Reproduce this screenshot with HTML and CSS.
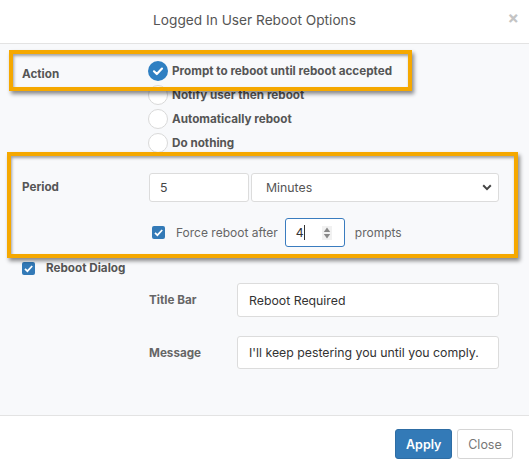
FILE: index.html
```html
<!DOCTYPE html>
<html>
<head>
<meta charset="utf-8">
<link rel="stylesheet" href="styles.css">
</head>
<body>
<div class="modal">
  <div class="modal-header">
    <span></span>
    <h1 class="modal-title">Logged In User Reboot Options</h1>
    <span class="close">&times;</span>
  </div>
  <div class="modal-body">
    <div class="row row-action">
      <div class="label label-action">Action</div>
      <div class="radios">
        <div class="radio"><span class="radio-dot checked"><svg viewBox="0 0 20 20" width="20" height="20"><path d="M6 10.3 L8.8 13 L14 7.6" fill="none" stroke="#fff" stroke-width="2.2" stroke-linecap="round" stroke-linejoin="round"/></svg></span><span class="radio-text">Prompt to reboot until reboot accepted</span></div>
        <div class="radio"><span class="radio-dot"></span><span class="radio-text">Notify user then reboot</span></div>
        <div class="radio"><span class="radio-dot"></span><span class="radio-text">Automatically reboot</span></div>
        <div class="radio"><span class="radio-dot"></span><span class="radio-text">Do nothing</span></div>
      </div>
    </div>

    <div class="row row-period">
      <div class="label label-period">Period</div>
      <div class="controls">
        <div class="period-inputs">
          <div class="input input-num">5</div>
          <div class="input select"><span>Minutes</span><svg class="chev" viewBox="0 0 10 7" width="10" height="7"><path d="M1.2 1.3 L5 5.1 L8.8 1.3" fill="none" stroke="#444" stroke-width="2"/></svg></div>
        </div>
        <div class="force">
          <span class="check"><svg viewBox="0 0 13 13" width="13" height="13"><path d="M3 6.8 L5.4 9.2 L10.2 4" fill="none" stroke="#fff" stroke-width="1.7"/></svg></span>
          <span class="force-text">Force reboot after</span>
          <div class="input spin"><span class="spin-val">4<span class="caret"></span></span><svg class="spin-arrows" viewBox="0 0 10 14" width="10" height="14"><rect x="0" y="0" width="10" height="14" fill="#f1f1f1"/><path d="M5 1.5 L8.2 6 L1.8 6 Z" fill="#888"/><path d="M5 12.5 L8.2 8 L1.8 8 Z" fill="#888"/></svg></div>
          <span class="force-text prompts">prompts</span>
        </div>
      </div>
    </div>

    <div class="dialog-toggle">
      <span class="check"><svg viewBox="0 0 13 13" width="13" height="13"><path d="M3 6.8 L5.4 9.2 L10.2 4" fill="none" stroke="#fff" stroke-width="1.7"/></svg></span>
      <span class="dialog-text">Reboot Dialog</span>
    </div>

    <div class="sub-row">
      <div class="sub-label">Title Bar</div>
      <div class="input text-input">Reboot Required</div>
    </div>
    <div class="sub-row sub-row-2">
      <div class="sub-label">Message</div>
      <div class="input text-input">I'll keep pestering you until you comply.</div>
    </div>

    <div class="hl hl-1"></div>
    <div class="hl hl-2"></div>
  </div>
  <div class="modal-footer">
    <button class="btn btn-primary">Apply</button>
    <button class="btn btn-default">Close</button>
  </div>
</div>
</body>
</html>
```

FILE: styles.css
```css
* { box-sizing: border-box; }
html, body { margin: 0; padding: 0; }
body {
  font-family: Inter, "Noto Sans", "Liberation Sans", sans-serif;
  color: #555;
  background: #fff;
  width: 529px;
  height: 471px;
  overflow: hidden;
}
.modal { width: 529px; height: 471px; display: flex; flex-direction: column; }
.modal-header {
  height: 44px;
  border-bottom: 1px solid #e3e3e3;
  display: grid;
  grid-template-columns: 1fr auto 1fr;
  align-items: center;
  padding: 0 10px 3px 0;
  background: #fff;
}
.modal-title {
  margin: 0 10px 0 0;
  font-size: 13.7px;
  font-weight: 400;
  color: #555;
}
.close {
  justify-self: end;
  font-size: 17px;
  font-weight: 700;
  color: #c4c4c4;
  line-height: 1;
  margin-top: -3px;
}
.modal-body {
  position: relative;
  height: 371px;
  background: #f8f9fb;
  padding: 15px 30px 0 22px;
}
.row { display: flex; }
.label {
  width: 127px;
  flex: none;
  font-size: 11.7px;
  font-weight: 700;
  color: #555;
}
.label-action { padding-top: 8px; }
.radios { display: flex; flex-direction: column; }
.radio { height: 24px; display: flex; align-items: center; }
.radio-dot {
  width: 20px; height: 20px; border-radius: 50%;
  background: #fff; border: 1px solid #d9d9d9;
  margin-left: -1px; margin-right: 4px;
  display: flex; align-items: center; justify-content: center;
}
.radio-dot.checked { background: #2e7fc2; border: none; }
.radio-text { font-size: 11.7px; font-weight: 700; color: #555; }
.row-period { margin-top: 18px; }
.label-period { padding-top: 7px; }
.controls { flex: 1; }
.period-inputs { display: flex; gap: 2px; }
.input {
  background: #fff;
  border: 1px solid #dcdcdc;
  border-radius: 3px;
  font-size: 12.3px;
  color: #444;
  display: flex;
  align-items: center;
}
.input-num { width: 100px; height: 29px; padding-left: 10px; }
.select { flex: 1; height: 29px; padding: 0 6px 0 14px; justify-content: space-between; color: #555; }
.force { display: flex; align-items: center; margin-top: 16px; padding-left: 3px; }
.check {
  width: 13px; height: 13px; background: #337ab7; border-radius: 2px;
  display: inline-flex; flex: none;
}
.force-text { font-size: 12px; color: #666; margin-left: 11px; }
.prompts { margin-left: 10px; }
.spin {
  width: 60px; height: 29px; margin-left: 7px;
  border-color: #3a7cbf;
  padding: 0 12px 0 10px;
  justify-content: space-between;
}
.spin-val { display: inline-flex; align-items: center; color: #333; }
.caret { width: 1px; height: 15px; background: #333; margin-left: 0; }
.dialog-toggle { display: flex; align-items: center; margin-top: 14px; height: 14px; }
.dialog-text { font-size: 11.7px; font-weight: 700; color: #555; margin-left: 11px; }
.sub-row { display: flex; align-items: center; margin-top: 8px; padding-left: 127px; }
.sub-row-2 { margin-top: 19px; }
.sub-label { width: 88px; flex: none; font-size: 11.7px; font-weight: 700; color: #666; }
.text-input { flex: 1; height: 34px; padding-left: 11px; font-size: 12.3px; color: #333; }
.sub-row-2 .text-input { height: 33px; }

.hl {
  position: absolute;
  border: 4px solid #f5a800;
  box-shadow: 2px 3px 4px rgba(0,0,0,0.45), inset 1px 2px 3px rgba(0,0,0,0.35);
  pointer-events: none;
}
.hl-1 { left: 9px; top: 6px; width: 403px; height: 41px; }
.hl-2 { left: 7px; top: 108px; width: 511px; height: 106px; }

.modal-footer {
  flex: 1;
  border-top: 1px solid #e3e3e3;
  display: flex;
  justify-content: flex-end;
  align-items: flex-start;
  gap: 5px;
  padding: 13px 16px 0 0;
  background: #fff;
}
.btn {
  font-family: inherit;
  height: 30px;
  font-size: 12.5px;
  border-radius: 3px;
  padding: 0 10px;
  cursor: pointer;
}
.btn-primary { background: #337ab7; border: 1px solid #2e6da4; color: #fff; font-weight: 600; width: 57px; }
.btn-default { background: #fff; border: 1px solid #d5d5d5; color: #777; width: 56px; }
```
